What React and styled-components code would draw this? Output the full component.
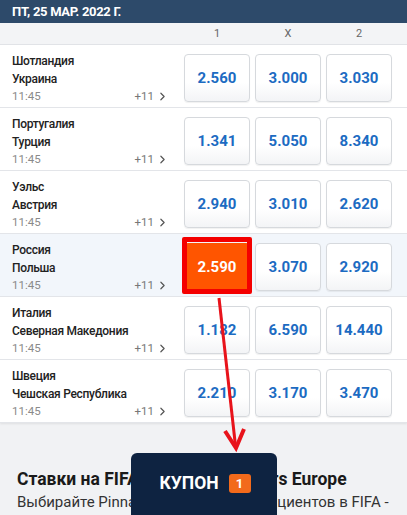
import React from 'react';
import styled, { createGlobalStyle } from 'styled-components';
import { ChevronRight } from 'lucide-react';

const GlobalStyle = createGlobalStyle`
  body {
    margin: 0;
    font-family: Roboto, "Noto Sans", Arial, sans-serif;
    background: #f1f2f4;
  }
`;

const matches = [
  { home: 'Шотландия', away: 'Украина', odds: ['2.560', '3.000', '3.030'] },
  { home: 'Португалия', away: 'Турция', odds: ['1.341', '5.050', '8.340'] },
  { home: 'Уэльс', away: 'Австрия', odds: ['2.940', '3.010', '2.620'] },
  { home: 'Россия', away: 'Польша', odds: ['2.590', '3.070', '2.920'], picked: 0 },
  { home: 'Италия', away: 'Северная Македония', odds: ['1.182', '6.590', '14.440'] },
  { home: 'Швеция', away: 'Чешская Республика', odds: ['2.210', '3.170', '3.470'] },
];

export default function App() {
  return (
    <>
      <GlobalStyle />
      <Page>
        <DateBar>ПТ, 25 МАР. 2022 Г.</DateBar>
        <ColHead>
          <span>1</span>
          <span>X</span>
          <span>2</span>
        </ColHead>
        <List>
          {matches.map((m) => (
            <Row key={m.home} $active={m.picked !== undefined}>
              <Info>
                <Team>{m.home}</Team>
                <Team>{m.away}</Team>
                <Meta>
                  <span>11:45</span>
                  <More>
                    +11 <ChevronRight size={13} strokeWidth={2.2} />
                  </More>
                </Meta>
              </Info>
              {m.odds.map((o, i) => (
                <Odd key={i} $picked={m.picked === i}>
                  {o}
                  {m.picked === i && <Highlight />}
                </Odd>
              ))}
            </Row>
          ))}
        </List>
        <Promo>
          <h3>Ставки на FIFA Pro Clubs: Players Europe</h3>
          <p>Выбирайте Pinnacle для ТОП коэффициентов в FIFA - </p>
        </Promo>
        <Arrow width="407" height="515" viewBox="0 0 407 515">
          <line x1="219" y1="298" x2="235.5" y2="446" stroke="#e8131b" strokeWidth="3" />
          <polyline points="225,431 236,448 244,429" fill="none" stroke="#e8131b" strokeWidth="4" strokeLinejoin="miter" />
        </Arrow>
        <Coupon>
          КУПОН <Badge>1</Badge>
        </Coupon>
      </Page>
    </>
  );
}

const Page = styled.div`
  position: relative;
  width: 407px;
  height: 515px;
  overflow: hidden;
  background: #f1f2f4;
`;

const DateBar = styled.div`
  height: 23px;
  background: #2d4a6a;
  color: #fff;
  font-weight: 700;
  font-size: 13px;
  letter-spacing: -0.3px;
  line-height: 23px;
  padding-left: 12px;
`;

const ColHead = styled.div`
  height: 21px;
  background: #f3f4f6;
  border-bottom: 1px solid #e2e4e8;
  display: grid;
  grid-template-columns: 66px 66px 66px;
  column-gap: 5px;
  justify-content: end;
  padding-right: 15px;
  align-items: center;
  font-size: 11px;
  color: #666;
  span {
    text-align: center;
  }
`;

const List = styled.div`
  background: #fff;
  box-shadow: 0 1px 2px rgba(0, 0, 0, 0.08);
`;

const Row = styled.div`
  height: 62px;
  border-bottom: 1px solid #e3e5e9;
  display: grid;
  grid-template-columns: 1fr 66px 66px 66px;
  column-gap: 5px;
  padding: 0 15px 0 12px;
  align-items: start;
  background: ${(p) => (p.$active ? '#f2f6fb' : '#fff')};
`;

const Info = styled.div`
  padding-top: 8px;
  padding-right: 10px;
  display: flex;
  flex-direction: column;
`;

const Team = styled.div`
  font-size: 12px;
  font-weight: 500;
  letter-spacing: -0.3px;
  color: #222;
  line-height: 17.5px;
  white-space: nowrap;
`;

const Meta = styled.div`
  display: flex;
  justify-content: space-between;
  align-items: center;
  font-size: 11.5px;
  color: #8a8a8a;
  margin-top: 1px;
`;

const More = styled.span`
  display: flex;
  align-items: center;
  gap: 2px;
  color: #777;
  svg {
    color: #555;
  }
`;

const Odd = styled.div`
  position: relative;
  margin-top: 9px;
  height: 48px;
  box-sizing: border-box;
  border: 1px solid ${(p) => (p.$picked ? '#ff5500' : '#d6d9dd')};
  border-radius: 4px;
  background: ${(p) => (p.$picked ? '#ff5500' : 'linear-gradient(#fff 60%, #f3f4f6)')};
  box-shadow: 0 1px 1px rgba(0, 0, 0, 0.06);
  display: flex;
  align-items: center;
  justify-content: center;
  font-weight: 700;
  font-size: 15px;
  color: ${(p) => (p.$picked ? '#fff' : '#1c6bc2')};
`;

const Highlight = styled.div`
  position: absolute;
  top: -7px;
  left: -3px;
  right: -3px;
  bottom: -4px;
  border: 5px solid #f40000;
  border-radius: 2px;
`;

const Promo = styled.div`
  padding: 46px 17px 0;
  h3 {
    margin: 0 0 4px;
    font-size: 17.5px;
    font-weight: 700;
    color: #1a1a1a;
    white-space: nowrap;
  }
  p {
    margin: 0;
    font-size: 15px;
    color: #333;
    white-space: nowrap;
  }
`;

const Arrow = styled.svg`
  position: absolute;
  left: 0;
  top: 0;
  pointer-events: none;
`;

const Coupon = styled.div`
  position: absolute;
  left: 131px;
  top: 453px;
  width: 146px;
  height: 70px;
  box-sizing: border-box;
  padding-top: 21px;
  background: #0e2341;
  border-radius: 6px 6px 0 0;
  color: #fff;
  font-weight: 700;
  font-size: 17.5px;
  display: flex;
  justify-content: center;
  align-items: flex-start;
  gap: 10px;
  padding-left: 2px;
  line-height: 19px;
`;

const Badge = styled.span`
  display: inline-flex;
  align-items: center;
  justify-content: center;
  width: 22px;
  height: 19px;
  background: #f26a1b;
  border-radius: 3px;
  font-size: 13px;
`;
